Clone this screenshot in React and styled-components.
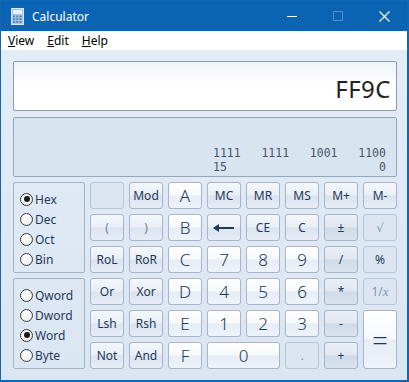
import styled, { createGlobalStyle, css } from "styled-components";

const GlobalStyle = createGlobalStyle`
  html, body { margin: 0; padding: 0; background: #ffffff; }
  body { font-family: "Noto Sans", "DejaVu Sans", sans-serif; }
`;

const Frame = styled.div`
  width: 409px;
  height: 382px;
  box-sizing: border-box;
  border: 1px solid #1266b4;
  border-right-width: 2px;
  border-bottom-width: 2px;
  display: flex;
  flex-direction: column;
  background: linear-gradient(180deg, #e4edf8 0%, #dbe6f3 100%);
`;

const TitleBar = styled.div`
  height: 30px;
  background: #0b64b3;
  display: flex;
  align-items: center;
  color: #ffffff;
  font-size: 12px;
`;

const TitleText = styled.span`
  margin-left: 8px;
  flex: 1;
`;

const WinButton = styled.div`
  width: 46px;
  height: 30px;
  display: flex;
  align-items: center;
  justify-content: center;
`;

const MenuBar = styled.div`
  height: 19px;
  background: #ffffff;
  display: flex;
  align-items: center;
  gap: 13px;
  padding-left: 7px;
  font-size: 12px;
  color: #000000;
  u { text-decoration: underline; }
`;

const Body = styled.div`
  flex: 1;
  padding: 11px 0 0 12px;
  display: flex;
  flex-direction: column;
`;

const MainDisplay = styled.div`
  width: 384px;
  height: 50px;
  box-sizing: border-box;
  border: 1px solid #8e9bad;
  border-radius: 2px;
  background: linear-gradient(180deg, #eef3fa 0%, #ffffff 45%, #ffffff 100%);
  display: flex;
  align-items: flex-end;
  justify-content: flex-end;
  padding: 0 5px 9px 0;
  font-size: 24px;
  color: #222222;
  letter-spacing: 0.5px;
  line-height: 1;
`;

const BitDisplay = styled.div`
  width: 384px;
  height: 60px;
  margin-top: 6px;
  box-sizing: border-box;
  border: 1px solid #97a6b9;
  border-radius: 2px;
  background: #d9e4f1;
  display: flex;
  flex-direction: column;
  justify-content: flex-end;
  align-items: flex-end;
  padding: 0 10px 2px 0;
  font-family: "DejaVu Sans Mono", "Liberation Mono", monospace;
  font-size: 11.5px;
  line-height: 14px;
  color: #4a5566;
`;

const BitRow = styled.div`
  display: flex;
  gap: 19px;
  width: 173px;
  justify-content: space-between;
`;

const Lower = styled.div`
  display: flex;
  gap: 5px;
  margin-top: 5px;
`;

const Groups = styled.div`
  display: flex;
  flex-direction: column;
  gap: 5px;
`;

const Group = styled.div`
  width: 72px;
  height: 91px;
  box-sizing: border-box;
  border: 1px solid #a4b2c4;
  border-radius: 2px;
  padding: 8px 0 0 6px;
  display: flex;
  flex-direction: column;
  gap: 4px;
`;

const Radio = styled.div`
  display: flex;
  align-items: center;
  gap: 2px;
  height: 16px;
  font-size: 12px;
  color: #1e395b;
`;

const Dot = styled.span`
  width: 11px;
  height: 11px;
  border-radius: 50%;
  border: 1px solid #3c3c3c;
  background: radial-gradient(circle at 40% 35%, #ffffff 0%, #f0f0f0 60%, #dcdcdc 100%);
  display: flex;
  align-items: center;
  justify-content: center;
  &::after {
    content: "";
    width: 6px;
    height: 6px;
    border-radius: 50%;
    background: ${(p) => (p.$on ? "#1a1a1a" : "transparent")};
  }
`;

const Keys = styled.div`
  display: grid;
  grid-template-columns: repeat(8, 34px);
  grid-template-rows: repeat(6, 27px);
  gap: 5px;
`;

const kinds = {
  fn: css`
    background: linear-gradient(180deg, #f4f8fc 0%, #e9eff7 48%, #dbe4ef 52%, #e6edf6 100%);
    color: ${(p) => (p.$dim ? "#6f8199" : "#1e395b")};
    font-size: 12px;
  `,
  digit: css`
    background: linear-gradient(180deg, #ffffff 0%, #f6f9fc 48%, #e6edf5 52%, #eef3f9 100%);
    color: #1e395b;
    font-size: 17px;
    font-weight: 300;
  `,
  op: css`
    background: linear-gradient(180deg, #eaf0f7 0%, #dfe7f1 48%, #cfdbe8 52%, #dae3ee 100%);
    color: #1e395b;
    font-size: 12px;
  `,
  flat: css`
    background: #dce6f2;
    border-color: #b8c6d8;
    color: #8496ac;
    font-size: 12px;
  `,
};

const Key = styled.div`
  box-sizing: border-box;
  border: 1px solid #a7b5c7;
  border-radius: 3px;
  display: flex;
  align-items: center;
  justify-content: center;
  line-height: 1;
  ${(p) => kinds[p.$kind || "fn"]}
  ${(p) => p.$wide && "grid-column: span 2;"}
  ${(p) => p.$tall && "grid-row: span 2;"}
`;

const Arrow = () => (
  <svg width="22" height="8" viewBox="0 0 22 8">
    <path d="M1 4 H21" stroke="#1e395b" strokeWidth="2" />
    <path d="M0 4 L6 0 L6 8 Z" fill="#1e395b" />
  </svg>
);

const CalcIcon = () => (
  <svg width="13" height="17" viewBox="0 0 13 17">
    <rect x="0.5" y="0.5" width="12" height="16" fill="#a7c7e7" stroke="#d6e6f5" />
    <rect x="2" y="2" width="9" height="4" fill="#e8f1fa" />
    {[0, 1, 2].map((r) =>
      [0, 1, 2].map((c) => (
        <rect key={`${r}${c}`} x={2 + c * 3.2} y={7.5 + r * 2.8} width="2.2" height="1.8" fill="#5a86b5" />
      ))
    )}
  </svg>
);

const keys = [
  ["", "flat"], ["Mod"], ["A", "digit"], ["MC"], ["MR"], ["MS"], ["M+"], ["M-"],
  ["(", "fn", true], [")", "fn", true], ["B", "digit"], ["←"], ["CE"], ["C"], ["±", "op"], ["√", "flat"],
  ["RoL"], ["RoR"], ["C", "digit"], ["7", "digit"], ["8", "digit"], ["9", "digit"], ["/", "op"], ["%", "flat", false, true],
  ["Or"], ["Xor"], ["D", "digit"], ["4", "digit"], ["5", "digit"], ["6", "digit"], ["*", "op"], ["1/x", "flat"],
  ["Lsh"], ["Rsh"], ["E", "digit"], ["1", "digit"], ["2", "digit"], ["3", "digit"], ["-", "op"], ["=", "eq"],
  ["Not"], ["And"], ["F", "digit"], ["0", "zero"], [".", "flat"], ["+", "op"],
];

const renderKey = ([label, kind = "fn", dim, darkText], i) => {
  if (label === "←") return <Key key={i}><Arrow /></Key>;
  if (kind === "eq")
    return (
      <Key key={i} $kind="digit" $tall style={{ fontSize: 28 }}>
        =
      </Key>
    );
  if (kind === "zero")
    return (
      <Key key={i} $kind="digit" $wide>
        0
      </Key>
    );
  if (label === "1/x")
    return (
      <Key key={i} $kind="flat">
        1/<i style={{ fontFamily: "Liberation Serif, serif", fontSize: 13 }}>x</i>
      </Key>
    );
  return (
    <Key key={i} $kind={kind} $dim={dim} style={darkText ? { color: "#1e395b" } : undefined}>
      {label}
    </Key>
  );
};

const bases = [["Hex", true], ["Dec"], ["Oct"], ["Bin"]];
const sizes = [["Qword"], ["Dword"], ["Word", true], ["Byte"]];

const App = () => (
  <>
    <GlobalStyle />
    <Frame>
      <TitleBar>
        <span style={{ marginLeft: 10, display: "flex" }}><CalcIcon /></span>
        <TitleText>Calculator</TitleText>
        <WinButton>
          <svg width="10" height="10"><path d="M0 5.5 H10" stroke="#fff" /></svg>
        </WinButton>
        <WinButton>
          <svg width="10" height="10"><rect x="0.5" y="0.5" width="9" height="9" fill="none" stroke="#4f8ccb" /></svg>
        </WinButton>
        <WinButton>
          <svg width="11" height="11"><path d="M0.5 0.5 L10.5 10.5 M10.5 0.5 L0.5 10.5" stroke="#fff" strokeWidth="1.1" /></svg>
        </WinButton>
      </TitleBar>
      <MenuBar>
        <span><u>V</u>iew</span>
        <span><u>E</u>dit</span>
        <span><u>H</u>elp</span>
      </MenuBar>
      <Body>
        <MainDisplay>FF9C</MainDisplay>
        <BitDisplay>
          <BitRow>
            <span>1111</span><span>1111</span><span>1001</span><span>1100</span>
          </BitRow>
          <BitRow>
            <span>15</span><span>0</span>
          </BitRow>
        </BitDisplay>
        <Lower>
          <Groups>
            <Group>
              {bases.map(([l, on]) => (
                <Radio key={l}><Dot $on={on} />{l}</Radio>
              ))}
            </Group>
            <Group>
              {sizes.map(([l, on]) => (
                <Radio key={l}><Dot $on={on} />{l}</Radio>
              ))}
            </Group>
          </Groups>
          <Keys>{keys.map(renderKey)}</Keys>
        </Lower>
      </Body>
    </Frame>
  </>
);

export default App;
